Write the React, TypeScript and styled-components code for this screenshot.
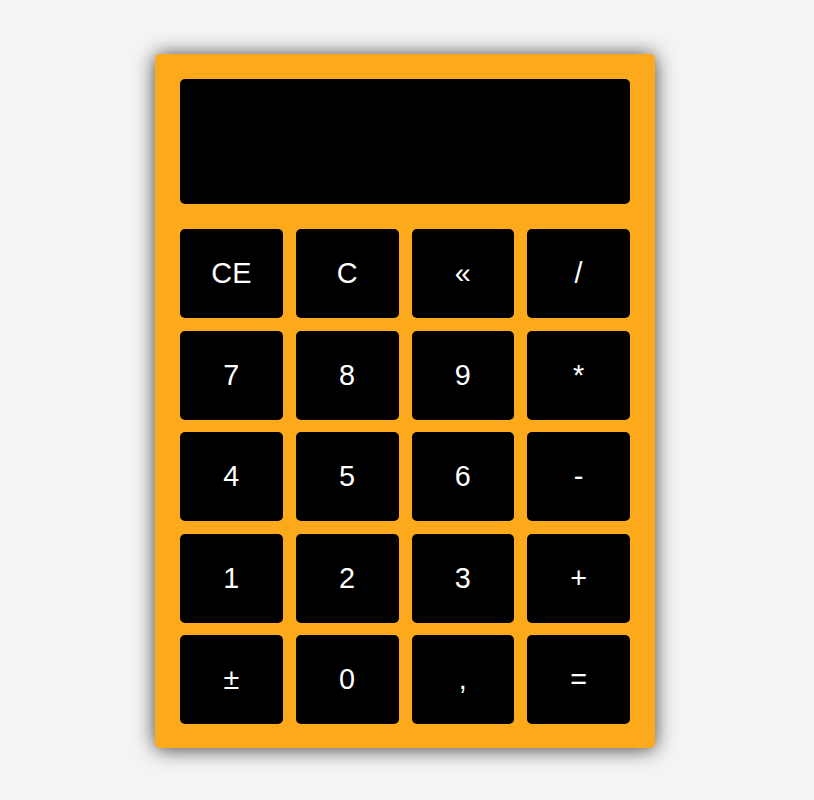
import React from "react";
import styled, { createGlobalStyle } from "styled-components";

const GlobalStyle = createGlobalStyle`
  html, body {
    margin: 0;
    padding: 0;
    background: #f4f4f4;
  }
  body {
    font-family: "Liberation Sans", Arial, sans-serif;
  }
`;

const Page = styled.div`
  width: 814px;
  height: 800px;
  display: flex;
  justify-content: flex-start;
  padding: 54px 0 0 155px;
  box-sizing: border-box;
`;

const Calculator = styled.div`
  width: 500px;
  height: 694px;
  box-sizing: border-box;
  padding: 25px 25px 24px;
  background: #fcaa1c;
  border-radius: 5px;
  box-shadow: 0 1px 20px rgba(0, 0, 0, 0.75);
  display: flex;
  flex-direction: column;
  gap: 25px;
`;

const Display = styled.div`
  height: 125px;
  background: #000;
  border-radius: 5px;
`;

const Keypad = styled.div`
  display: grid;
  grid-template-columns: repeat(4, 1fr);
  grid-auto-rows: 89px;
  column-gap: 13px;
  row-gap: 12.5px;
`;

const Key = styled.button`
  border: none;
  margin: 0;
  padding: 0;
  background: #000;
  color: #fff;
  border-radius: 5px;
  font-family: "Liberation Sans", Arial, sans-serif;
  font-size: 28.8px;
  display: flex;
  align-items: center;
  justify-content: center;
  cursor: pointer;
`;

const keys = [
  "CE", "C", "«", "/",
  "7", "8", "9", "*",
  "4", "5", "6", "-",
  "1", "2", "3", "+",
  "±", "0", ",", "=",
];

export default function App() {
  return (
    <>
      <GlobalStyle />
      <Page>
        <Calculator>
          <Display />
          <Keypad>
            {keys.map((k) => (
              <Key key={k}>{k}</Key>
            ))}
          </Keypad>
        </Calculator>
      </Page>
    </>
  );
}
